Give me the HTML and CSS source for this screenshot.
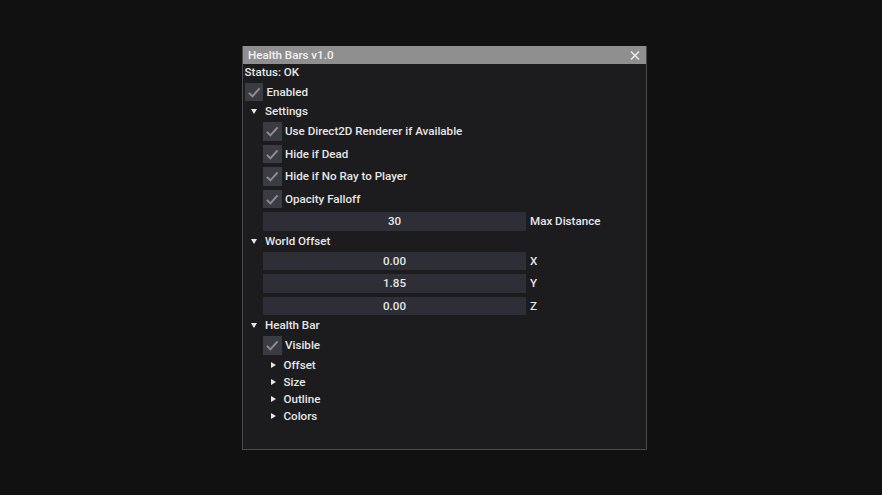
FILE: index.html
```html
<!DOCTYPE html>
<html>
<head>
<meta charset="utf-8">
<link rel="stylesheet" href="styles.css">
</head>
<body>
<div class="window">
  <div class="titlebar">
    <span class="title">Health Bars v1.0</span>
    <svg class="close" width="10" height="9" viewBox="0 0 10 9"><path d="M1 0.5 L9 8.5 M9 0.5 L1 8.5" stroke="#ececec" stroke-width="1.5" fill="none"/></svg>
  </div>
  <div class="content">
    <div class="text"><span class="lbl">Status: OK</span></div>
    <div class="check"><span class="box"><svg viewBox="0 0 18 18" width="18.5" height="18.5"><path d="M3.8 9.6 L7.2 13 L14.2 5.2" stroke="#8c8c92" stroke-width="2" fill="none"/></svg></span><span class="lbl">Enabled</span></div>
    <div class="node"><span class="arrow down"></span><span class="lbl">Settings</span></div>
    <div class="children">
      <div class="check"><span class="box"><svg viewBox="0 0 18 18" width="18.5" height="18.5"><path d="M3.8 9.6 L7.2 13 L14.2 5.2" stroke="#8c8c92" stroke-width="2" fill="none"/></svg></span><span class="lbl">Use Direct2D Renderer if Available</span></div>
      <div class="check"><span class="box"><svg viewBox="0 0 18 18" width="18.5" height="18.5"><path d="M3.8 9.6 L7.2 13 L14.2 5.2" stroke="#8c8c92" stroke-width="2" fill="none"/></svg></span><span class="lbl">Hide if Dead</span></div>
      <div class="check"><span class="box"><svg viewBox="0 0 18 18" width="18.5" height="18.5"><path d="M3.8 9.6 L7.2 13 L14.2 5.2" stroke="#8c8c92" stroke-width="2" fill="none"/></svg></span><span class="lbl">Hide if No Ray to Player</span></div>
      <div class="check"><span class="box"><svg viewBox="0 0 18 18" width="18.5" height="18.5"><path d="M3.8 9.6 L7.2 13 L14.2 5.2" stroke="#8c8c92" stroke-width="2" fill="none"/></svg></span><span class="lbl">Opacity Falloff</span></div>
      <div class="slider-row"><span class="slider"><span class="lbl">30</span></span><span class="lbl">Max Distance</span></div>
    </div>
    <div class="node"><span class="arrow down"></span><span class="lbl">World Offset</span></div>
    <div class="children">
      <div class="slider-row"><span class="slider"><span class="lbl">0.00</span></span><span class="lbl">X</span></div>
      <div class="slider-row"><span class="slider"><span class="lbl">1.85</span></span><span class="lbl">Y</span></div>
      <div class="slider-row"><span class="slider"><span class="lbl">0.00</span></span><span class="lbl">Z</span></div>
    </div>
    <div class="node"><span class="arrow down"></span><span class="lbl">Health Bar</span></div>
    <div class="children">
      <div class="check"><span class="box"><svg viewBox="0 0 18 18" width="18.5" height="18.5"><path d="M3.8 9.6 L7.2 13 L14.2 5.2" stroke="#8c8c92" stroke-width="2" fill="none"/></svg></span><span class="lbl">Visible</span></div>
      <div class="node"><span class="arrow right"></span><span class="lbl">Offset</span></div>
      <div class="node"><span class="arrow right"></span><span class="lbl">Size</span></div>
      <div class="node"><span class="arrow right"></span><span class="lbl">Outline</span></div>
      <div class="node"><span class="arrow right"></span><span class="lbl">Colors</span></div>
    </div>
  </div>
</div>
</body>
</html>
```
FILE: styles.css
```css
html, body {
  margin: 0;
  background: #111112;
}
body {
  padding: 46px 0 0 242px;
  height: 495px;
  box-sizing: border-box;
  font-family: Roboto, "Liberation Sans", sans-serif;
  font-weight: 500;
  font-size: 11.6px;
  color: #e6e6e6;
}
.window {
  width: 405px;
  height: 404px;
  box-sizing: border-box;
  background: #1c1c1f;
  border: 1px solid #4a4a4c;
  border-top: none;
  display: flex;
  flex-direction: column;
}
.titlebar {
  height: 18px;
  background: #8f8f8f;
  display: flex;
  align-items: center;
  justify-content: space-between;
  padding: 0 6px 0 5px;
  color: #f2f2f2;
}
.title { line-height: 18px; padding-top: 0.5px; }
.close { display: block; }
.content {
  padding: 1.5px 0 0 1.5px;
  display: flex;
  flex-direction: column;
  gap: 4px;
}
.lbl { padding-top: 0.5px; line-height: 13px; }
.text { line-height: 13px; height: 13px; display: flex; align-items: center; }
.check {
  display: flex;
  align-items: center;
  gap: 3.5px;
  height: 18.5px;
  line-height: 13px;
}
.box {
  width: 18.5px;
  height: 18.5px;
  background: #3b3b44;
  display: block;
}
.box svg { display: block; }
.node {
  display: flex;
  align-items: center;
  height: 13px;
  line-height: 13px;
}
.arrow {
  width: 20.5px;
  height: 13px;
  position: relative;
  flex: none;
}
.arrow.down::before {
  content: "";
  position: absolute;
  left: 6px;
  top: 4px;
  border-left: 3.5px solid transparent;
  border-right: 3.5px solid transparent;
  border-top: 5.5px solid #e6e6e6;
}
.arrow.right::before {
  content: "";
  position: absolute;
  left: 7.5px;
  top: 3px;
  border-top: 3.5px solid transparent;
  border-bottom: 3.5px solid transparent;
  border-left: 5.5px solid #e6e6e6;
}
.children {
  padding-left: 18.5px;
  display: flex;
  flex-direction: column;
  gap: 4px;
}
.slider-row {
  display: flex;
  align-items: center;
  gap: 4px;
  height: 18.5px;
  line-height: 13px;
}
.slider {
  width: 263px;
  height: 18.5px;
  background: #2e2e37;
  display: flex;
  align-items: center;
  justify-content: center;
}
```
